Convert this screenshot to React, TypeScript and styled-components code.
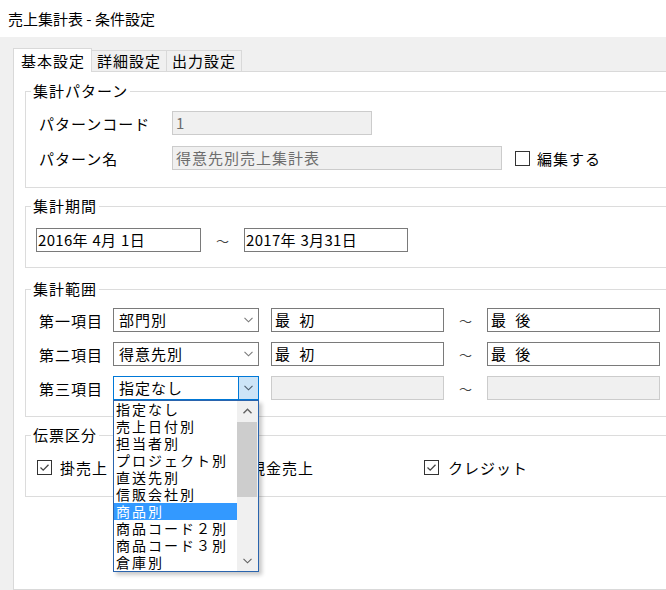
import React from 'react';
import styled, { createGlobalStyle, css } from 'styled-components';

const Global = createGlobalStyle`
  html, body { margin: 0; padding: 0; background: #fff; overflow: hidden; }
  body {
    font-family: "Noto Sans CJK JP", "Noto Sans", sans-serif;
    font-size: 15px;
    letter-spacing: 1px;
    color: #000;
  }
  * { box-sizing: border-box; }
`;

const Window = styled.div`
  width: 666px;
  height: 590px;
  overflow: hidden;
  display: flex;
  flex-direction: column;
`;

const TitleBar = styled.div`
  height: 37px;
  flex: none;
  display: flex;
  align-items: center;
  padding-left: 8px;
  background: #fff;
  letter-spacing: 0;
  font-size: 15px;
`;

const Client = styled.div`
  flex: 1;
  min-height: 0;
  background: #f0f0f0;
  padding: 11px 0 0 13px;
  display: flex;
  flex-direction: column;
  overflow: hidden;
`;

const TabStrip = styled.div`
  display: flex;
  align-items: flex-end;
  height: 23px;
  flex: none;
`;

const Tab = styled.div<{ $active?: boolean }>`
  display: flex;
  align-items: center;
  line-height: 20px;
  border: 1px solid #d9d9d9;
  border-bottom: none;
  white-space: nowrap;
  ${(p) =>
    p.$active
      ? css`
          background: #fff;
          height: 24px;
          padding: 0 6px 0 7px;
          margin-bottom: -1px;
          position: relative;
          z-index: 1;
        `
      : css`
          background: #f0f0f0;
          height: 21px;
          padding: 0 5px;
          border-left: none;
        `}
`;

const Panel = styled.div`
  flex: 1;
  width: 700px;
  background: #fff;
  border: 1px solid #d9d9d9;
  padding: 11px 0 0 11px;
  display: flex;
  flex-direction: column;
`;

const Group = styled.fieldset<{ $mt?: number; $pt: number; $pb: number }>`
  width: 680px;
  margin: ${(p) => p.$mt ?? 0}px 0 0 0;
  border: 1px solid #dcdcdc;
  padding: ${(p) => p.$pt}px 0 ${(p) => p.$pb}px 10px;
  min-width: 0;
`;

const Legend = styled.legend`
  padding: 0 2px;
  margin-left: -5px;
  line-height: 16px;
  height: 16px;
`;

const Stack = styled.div<{ $gap: number }>`
  display: flex;
  flex-direction: column;
  gap: ${(p) => p.$gap}px;
`;

const Row = styled.div`
  display: flex;
  align-items: center;
  height: 24px;
`;

const Label = styled.div<{ $w: number }>`
  width: ${(p) => p.$w}px;
  flex: none;
  padding-left: 3px;
  white-space: nowrap;
`;

const TextBox = styled.div<{ $w: number; $disabled?: boolean; $pad?: number; $date?: boolean; $ml?: number }>`
  width: ${(p) => p.$w}px;
  height: 24px;
  flex: none;
  margin-left: ${(p) => p.$ml ?? 0}px;
  border: 1px solid ${(p) => (p.$disabled ? '#cccccc' : '#7a7a7a')};
  background: ${(p) => (p.$disabled ? '#f0f0f0' : '#fff')};
  color: ${(p) => (p.$disabled ? '#6d6d6d' : '#000')};
  padding-left: ${(p) => p.$pad ?? 3}px;
  line-height: 22px;
  white-space: pre;
  word-spacing: 4px;
  ${(p) =>
    p.$date &&
    css`
      letter-spacing: 0.3px;
      word-spacing: 1px;
    `}
`;

const Tilde = styled.div<{ $w: number }>`
  width: ${(p) => p.$w}px;
  flex: none;
  text-align: center;
  color: #444;
  font-size: 13px;
  letter-spacing: 0;
`;

const SelectWrap = styled.div`
  position: relative;
  width: 146px;
  height: 24px;
  flex: none;
`;

const SelectBox = styled.div<{ $focused?: boolean }>`
  display: flex;
  height: 24px;
  border: 1px solid ${(p) => (p.$focused ? '#0078d7' : '#7a7a7a')};
  background: #fff;
`;

const SelectText = styled.div`
  flex: 1;
  padding-left: 5px;
  line-height: 22px;
  white-space: nowrap;
`;

const SelectButton = styled.div<{ $focused?: boolean }>`
  width: 20px;
  flex: none;
  display: flex;
  align-items: center;
  justify-content: center;
  ${(p) =>
    p.$focused &&
    css`
      background: #cce4f7;
      border-left: 1px solid #0078d7;
    `}
`;

const DropList = styled.div`
  position: absolute;
  top: 24px;
  left: 0;
  width: 146px;
  height: 172px;
  border: 1px solid #2a64ad;
  background: #fff;
  display: flex;
  z-index: 10;
  box-shadow: 3px 3px 4px rgba(0, 0, 0, 0.22);
`;

const Items = styled.div`
  flex: 1;
  display: flex;
  flex-direction: column;
`;

const Item = styled.div<{ $selected?: boolean }>`
  height: 17px;
  flex: none;
  line-height: 17px;
  font-size: 14px;
  letter-spacing: 2px;
  padding-left: 2px;
  white-space: nowrap;
  background: ${(p) => (p.$selected ? '#3399ff' : 'transparent')};
  color: ${(p) => (p.$selected ? '#fff' : '#000')};
`;

const ScrollBar = styled.div`
  width: 21px;
  flex: none;
  background: #f0f0f0;
  display: flex;
  flex-direction: column;
  align-items: stretch;
`;

const ScrollBtn = styled.div`
  height: 20px;
  flex: none;
  display: flex;
  align-items: center;
  justify-content: center;
`;

const Track = styled.div`
  flex: 1;
  padding: 1px 1px 0 0;
`;

const Thumb = styled.div`
  height: 75px;
  background: #cdcdcd;
`;

const CheckItem = styled.div<{ $w?: number; $gap: number; $ml?: number }>`
  display: flex;
  align-items: center;
  gap: ${(p) => p.$gap}px;
  margin-left: ${(p) => p.$ml ?? 0}px;
  ${(p) => (p.$w ? `width: ${p.$w}px; flex: none;` : '')}
  white-space: nowrap;
`;

const Box = styled.div`
  width: 15px;
  height: 15px;
  flex: none;
  border: 1px solid #333;
  background: #fff;
  display: flex;
  align-items: center;
  justify-content: center;
`;

const ChevronDown = ({ color = '#606060' }: { color?: string }) => (
  <svg width="9" height="6" viewBox="0 0 9 6">
    <polyline points="0.5,0.8 4.5,4.8 8.5,0.8" fill="none" stroke={color} strokeWidth="1.1" />
  </svg>
);

const ChevronUp = ({ color = '#606060' }: { color?: string }) => (
  <svg width="9" height="6" viewBox="0 0 9 6">
    <polyline points="0.5,5.2 4.5,1.2 8.5,5.2" fill="none" stroke={color} strokeWidth="1.4" />
  </svg>
);

const CheckBox = ({ checked, label, w, gap, ml }: { checked?: boolean; label: string; w?: number; gap: number; ml?: number }) => (
  <CheckItem $w={w} $gap={gap} $ml={ml}>
    <Box>
      {checked && (
        <svg width="13" height="13" viewBox="0 0 13 13">
          <polyline points="2.5,6.5 5.2,9.2 10.5,3.8" fill="none" stroke="#444" strokeWidth="1.3" />
        </svg>
      )}
    </Box>
    <span>{label}</span>
  </CheckItem>
);

const listItems = [
  '指定なし',
  '売上日付別',
  '担当者別',
  'プロジェクト別',
  '直送先別',
  '信販会社別',
  '商品別',
  '商品コード２別',
  '商品コード３別',
  '倉庫別',
];

const Select = ({ value, open }: { value: string; open?: boolean }) => (
  <SelectWrap>
    <SelectBox $focused={open}>
      <SelectText>{value}</SelectText>
      <SelectButton $focused={open}>
        <ChevronDown color={open ? '#4a5a6a' : '#7a7a7a'} />
      </SelectButton>
    </SelectBox>
    {open && (
      <DropList>
        <Items>
          {listItems.map((t) => (
            <Item key={t} $selected={t === '商品別'}>
              {t}
            </Item>
          ))}
        </Items>
        <ScrollBar>
          <ScrollBtn>
            <ChevronUp />
          </ScrollBtn>
          <Track>
            <Thumb />
          </Track>
          <ScrollBtn>
            <ChevronDown color="#606060" />
          </ScrollBtn>
        </ScrollBar>
      </DropList>
    )}
  </SelectWrap>
);

const rangeRows = [
  { label: '第一項目', value: '部門別', from: '最 初', to: '最 後' },
  { label: '第二項目', value: '得意先別', from: '最 初', to: '最 後' },
  { label: '第三項目', value: '指定なし', from: '', to: '', open: true },
];

export default function App() {
  return (
    <>
      <Global />
      <Window>
        <TitleBar>売上集計表 - 条件設定</TitleBar>
        <Client>
          <TabStrip>
            <Tab $active>基本設定</Tab>
            <Tab>詳細設定</Tab>
            <Tab>出力設定</Tab>
          </TabStrip>
          <Panel>
            <Group $pt={12} $pb={17}>
              <Legend>集計パターン</Legend>
              <Stack $gap={11}>
                <Row>
                  <Label $w={136}>パターンコード</Label>
                  <TextBox $w={200} $disabled>1</TextBox>
                </Row>
                <Row>
                  <Label $w={136}>パターン名</Label>
                  <TextBox $w={330} $disabled>得意先別売上集計表</TextBox>
                  <CheckBox label="編集する" gap={7} ml={13} />
                </Row>
              </Stack>
            </Group>

            <Group $mt={10} $pt={14} $pb={15}>
              <Legend>集計期間</Legend>
              <Row>
                <TextBox $w={165} $pad={1} $date>2016年 4月 1日</TextBox>
                <Tilde $w={43}>～</Tilde>
                <TextBox $w={164} $pad={1} $date>2017年 3月31日</TextBox>
              </Row>
            </Group>

            <Group $mt={13} $pt={11} $pb={16}>
              <Legend>集計範囲</Legend>
              <Stack $gap={10}>
                {rangeRows.map((r) => (
                  <Row key={r.label}>
                    <Label $w={77}>{r.label}</Label>
                    <Select value={r.value} open={r.open} />
                    <TextBox $w={173} $ml={12} $disabled={r.open}>{r.from}</TextBox>
                    <Tilde $w={43}>～</Tilde>
                    <TextBox $w={173} $disabled={r.open}>{r.to}</TextBox>
                  </Row>
                ))}
              </Stack>
            </Group>

            <Group $mt={10} $pt={12} $pb={17}>
              <Legend>伝票区分</Legend>
              <Row>
                <CheckBox checked label="掛売上" w={190} gap={8} ml={1} />
                <CheckBox checked label="現金売上" w={197} gap={8} />
                <CheckBox checked label="クレジット" gap={9} />
              </Row>
            </Group>
          </Panel>
        </Client>
      </Window>
    </>
  );
}
